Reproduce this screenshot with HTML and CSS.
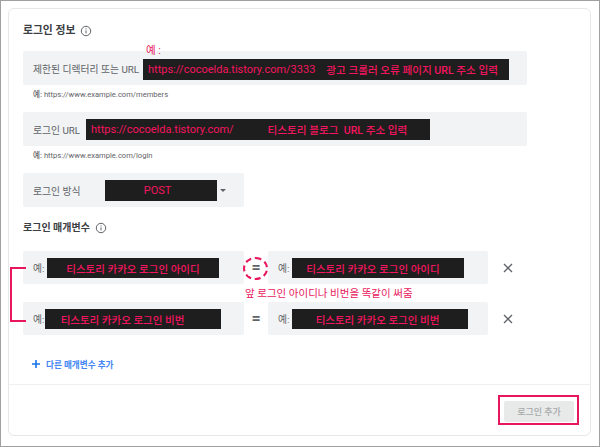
FILE: index.html
```html
<!DOCTYPE html>
<html lang="ko">
<head>
  <meta charset="UTF-8" />
  <title>로그인 추가</title>
  <link rel="stylesheet" href="styles.css">
</head>
<body>
  <div class="card">
    <div class="card-body">
      <h2 class="section-title">로그인 정보 <svg class="info-icon" viewBox="0 0 12 12"><circle cx="6" cy="6" r="4.7"/><path d="M6 5.4v3M6 3.4v1"/></svg></h2>

      <div class="field field-wide">
        <span class="field-label">제한된 디렉터리 또는 URL</span>
      </div>
      <p class="hint"><b>예:</b> https://www.example.com/members</p>

      <div class="field field-wide field-second">
        <span class="field-label">로그인 URL</span>
      </div>
      <p class="hint"><b>예:</b> https://www.example.com/login</p>

      <div class="field field-select">
        <span class="field-label">로그인 방식</span>
        <span class="caret"></span>
      </div>

      <h2 class="section-title section-params">로그인 매개변수 <svg class="info-icon" viewBox="0 0 12 12"><circle cx="6" cy="6" r="4.7"/><path d="M6 5.4v3M6 3.4v1"/></svg></h2>

      <div class="param-row">
        <div class="field field-param"><span class="field-label">예:</span></div>
        <span class="equals">=</span>
        <div class="field field-param"><span class="field-label">예:</span></div>
        <svg class="remove" viewBox="0 0 10 10"><path d="M1 1l8 8M9 1l-8 8"/></svg>
      </div>
      <div class="param-row param-row-second">
        <div class="field field-param"><span class="field-label">예:</span></div>
        <span class="equals">=</span>
        <div class="field field-param"><span class="field-label">예:</span></div>
        <svg class="remove" viewBox="0 0 10 10"><path d="M1 1l8 8M9 1l-8 8"/></svg>
      </div>

      <div class="add-param">
        <svg class="plus" viewBox="0 0 8 8"><path d="M4 0v8M0 4h8"/></svg>
        <span>다른 매개변수 추가</span>
      </div>
    </div>

    <div class="card-footer">
      <button class="add-btn">로그인 추가</button>
    </div>
  </div>

  <!-- annotations drawn over the screenshot -->
  <span class="note note-example">예 :</span>
  <div class="mask mask-1"><span>https://cocoelda.tistory.com/3333</span><span>광고 크롤러 오류 페이지 URL 주소 입력</span></div>
  <div class="mask mask-2"><span>https://cocoelda.tistory.com/</span><span>티스토리 블로그&nbsp; URL 주소 입력</span></div>
  <div class="mask mask-3">POST</div>
  <div class="mask mask-4">티스토리 카카오 로그인 아이디</div>
  <div class="mask mask-5">티스토리 카카오 로그인 아이디</div>
  <div class="mask mask-6">티스토리 카카오 로그인 비번</div>
  <div class="mask mask-7">티스토리 카카오 로그인 비번</div>
  <span class="note note-same">앞 로그인 아이디나 비번을 똑같이 써줌</span>
  <div class="dashed-ring"></div>
  <div class="bracket"></div>
  <div class="btn-outline"></div>
</body>
</html>
```

FILE: styles.css
```css
html, body {
  margin: 0;
  padding: 0;
}

body {
  position: relative;
  box-sizing: border-box;
  width: 600px;
  height: 447px;
  padding: 7px 8px 0 7px;
  overflow: hidden;
  background-color: #ffffff;
  border: 1px solid #a0a0a0;
  font-family: Roboto, "Noto Sans CJK KR", sans-serif;
  color: #5f6368;
}

.card {
  box-sizing: border-box;
  width: 583px;
  height: 428px;
  border: 1px solid #e6e7e8;
  border-radius: 6px;
  display: flex;
  flex-direction: column;
}

.card-body {
  flex: 1;
  padding: 14px 14px 0;
}

.section-title {
  margin: 0;
  height: 16px;
  display: flex;
  align-items: center;
  gap: 5px;
  font-size: 10.8px;
  font-weight: 700;
  line-height: 16px;
  color: #3c4043;
}

.info-icon {
  width: 12px;
  height: 12px;
  fill: none;
  stroke: #5f6368;
  stroke-width: 1;
}

.field {
  box-sizing: border-box;
  display: flex;
  align-items: center;
  justify-content: space-between;
  height: 34px;
  padding: 1px 9px 0 10px;
  background-color: #f1f3f4;
  border-radius: 2px;
}

.field-label {
  font-size: 9.8px;
  color: #5f6368;
}

.field-wide {
  width: 504px;
  margin-top: 12px;
}

.field-second {
  margin-top: 12px;
}

.hint {
  margin: 4px 0 0 10px;
  height: 11px;
  font-size: 7.6px;
  line-height: 11px;
  color: #5f6368;
}

.hint b {
  font-weight: 500;
}

.field-select {
  width: 221px;
  margin-top: 12px;
}

.caret {
  width: 0;
  height: 0;
  margin-right: 9px;
  border-left: 3px solid transparent;
  border-right: 3px solid transparent;
  border-top: 3px solid #5f6368;
}

.section-params {
  margin-top: 13px;
  font-size: 10px;
}

.param-row {
  display: flex;
  align-items: center;
  margin-top: 15px;
}

.param-row-second {
  margin-top: 18px;
}

.field-param {
  width: 221px;
  height: 33px;
  padding-top: 0;
}

.field-param + .equals + .field-param {
  width: 220px;
}

.equals {
  width: 24px;
  text-align: center;
  font-size: 16px;
  font-weight: 700;
  color: #5f6368;
}

.remove {
  width: 10px;
  height: 10px;
  margin-left: 15px;
  fill: none;
  stroke: #5f6368;
  stroke-width: 1.3;
}

.add-param {
  display: flex;
  align-items: center;
  gap: 6px;
  margin: 23px 0 0 9px;
  font-size: 8.6px;
  font-weight: 700;
  color: #4285f4;
}

.plus {
  width: 8px;
  height: 8px;
  fill: none;
  stroke: #1a73e8;
  stroke-width: 1.6;
}

.card-footer {
  display: flex;
  justify-content: flex-end;
  height: 51px;
  padding: 16px 16px 0 0;
  box-sizing: border-box;
  border-top: 1px solid #f0f0f0;
}

.add-btn {
  width: 70px;
  height: 21px;
  padding: 0;
  border: none;
  border-radius: 2px;
  background-color: #e8eaea;
  color: #a6a8a9;
  font-family: inherit;
  font-size: 9px;
  font-weight: 500;
}

/* === Annotations === */
.note {
  position: absolute;
  font-size: 10.5px;
  line-height: 14px;
  color: #e8175d;
  white-space: nowrap;
}

.note-example {
  left: 145px;
  top: 43px;
}

.note-same {
  left: 244px;
  top: 286px;
}

.mask {
  position: absolute;
  box-sizing: border-box;
  display: flex;
  align-items: center;
  justify-content: center;
  height: 21px;
  background-color: #1e1e1e;
  color: #f5145f;
  font-size: 10.5px;
  font-weight: 500;
  white-space: nowrap;
}

.mask-1,
.mask-2 {
  justify-content: flex-start;
  padding-left: 5px;
  font-size: 11px;
  font-weight: 400;
}

.mask span + span {
  font-size: 10.6px;
  font-weight: 500;
}

.mask-1 {
  left: 142px;
  top: 58px;
  width: 366px;
  gap: 11px;
}

.mask-2 {
  left: 85px;
  top: 118px;
  width: 344px;
  gap: 34px;
}

.mask-3 {
  left: 104px;
  top: 179px;
  width: 112px;
  padding-right: 7px;
  font-size: 11px;
  font-weight: 400;
}

.mask-4 {
  left: 46px;
  top: 257px;
  width: 172px;
  height: 20px;
}

.mask-5 {
  left: 291px;
  top: 257px;
  width: 172px;
  height: 20px;
  padding-right: 10px;
}

.mask-6 {
  left: 44px;
  top: 308px;
  width: 176px;
  height: 20px;
  padding-right: 21px;
}

.mask-7 {
  left: 291px;
  top: 308px;
  width: 176px;
  height: 20px;
  padding-right: 5px;
}

.dashed-ring {
  position: absolute;
  left: 242px;
  top: 256px;
  width: 25px;
  height: 23px;
  box-sizing: border-box;
  border: 2px dashed #e8175d;
  border-radius: 50%;
}

.bracket {
  position: absolute;
  left: 9px;
  top: 266px;
  width: 16px;
  height: 55px;
  box-sizing: border-box;
  border: 2px solid #e8175d;
  border-right: none;
}

.btn-outline {
  position: absolute;
  left: 497px;
  top: 394px;
  width: 81px;
  height: 30px;
  box-sizing: border-box;
  border: 2px solid #e8175d;
}
```
